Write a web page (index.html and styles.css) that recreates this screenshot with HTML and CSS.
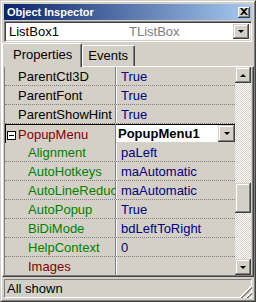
FILE: index.html
```html
<!DOCTYPE html>
<html lang="en">
<head>
    <meta charset="UTF-8">
    <title>Object Inspector</title>
    <link rel="stylesheet" href="styles.css">
</head>
<body>
<div id="window">
    <div id="frame">
        <div id="caption">
            <span class="caption-text">Object Inspector</span>
            <span class="close-btn">
                <svg width="8" height="7" viewBox="0 0 8 7"><path d="M0 0h2l2 2l2-2h2l-3 3.5l3 3.5h-2l-2-2l-2 2h-2l3-3.5z" fill="#000"/></svg>
            </span>
        </div>
        <div id="combo">
            <span class="combo-name">ListBox1</span>
            <span class="combo-type">TListBox</span>
            <span class="btn drop-btn"><i class="arrow-down"></i></span>
        </div>
        <div id="tabs">
            <div class="tab active">Properties</div>
            <div class="tab">Events</div>
        </div>
        <div id="sheet">
            <div id="grid">
                <div id="rows">
                    <div class="row"><div class="name">ParentCtl3D</div><div class="value">True</div></div>
                    <div class="row"><div class="name">ParentFont</div><div class="value">True</div></div>
                    <div class="row"><div class="name">ParentShowHint</div><div class="value">True</div></div>
                    <div class="row selected">
                        <div class="name ref"><span class="expand"></span>PopupMenu</div>
                        <div class="value"><span class="edit">PopupMenu1</span><span class="btn edit-btn"><i class="arrow-down"></i></span></div>
                    </div>
                    <div class="row"><div class="name sub">Alignment</div><div class="value">paLeft</div></div>
                    <div class="row"><div class="name sub">AutoHotkeys</div><div class="value">maAutomatic</div></div>
                    <div class="row"><div class="name sub">AutoLineReduction</div><div class="value">maAutomatic</div></div>
                    <div class="row"><div class="name sub">AutoPopup</div><div class="value">True</div></div>
                    <div class="row"><div class="name sub">BiDiMode</div><div class="value">bdLeftToRight</div></div>
                    <div class="row"><div class="name sub">HelpContext</div><div class="value">0</div></div>
                    <div class="row"><div class="name sub ref">Images</div><div class="value"></div></div>
                </div>
                <div id="scrollbar">
                    <span class="btn sb-btn"><i class="arrow-up"></i></span>
                    <span class="track top-track"></span>
                    <span class="btn thumb"></span>
                    <span class="track"></span>
                    <span class="btn sb-btn"><i class="arrow-down"></i></span>
                </div>
            </div>
        </div>
        <div id="status">
            <span class="panel">All shown</span>
            <span class="grip"></span>
        </div>
    </div>
</div>
</body>
</html>
```
FILE: styles.css
```css
*{
    margin: 0;
    padding: 0;
    box-sizing: border-box;
}
body{
    width: 256px;
    height: 302px;
    overflow: hidden;
    background: #d4d0c8;
    font-family: "Liberation Sans", Arial, sans-serif;
    font-size: 13px;
    color: #000;
}
#window{
    width: 256px;
    height: 302px;
    border: 1px solid;
    border-color: #d4d0c8 #404040 #404040 #d4d0c8;
}
#frame{
    height: 100%;
    border: 1px solid;
    border-color: #fff #808080 #808080 #fff;
    padding: 2px;
    display: flex;
    flex-direction: column;
}

/* caption */
#caption{
    height: 16px;
    flex: none;
    display: flex;
    align-items: center;
    justify-content: space-between;
    background: linear-gradient(to right, #0a246a, #a6caf0);
    color: #fff;
    padding: 0 2px 0 3px;
}
.caption-text{
    font-weight: bold;
    font-size: 11px;
}
.close-btn{
    width: 12px;
    height: 11px;
    display: flex;
    align-items: center;
    justify-content: center;
    background: #d4d0c8;
    box-shadow: inset -1px -1px #404040, inset 1px 1px #fff, inset -2px -2px #808080;
    padding-bottom: 1px;
}

/* 3d buttons and arrows */
.btn{
    display: flex;
    align-items: center;
    justify-content: center;
    background: #d4d0c8;
    box-shadow: inset -1px -1px #404040, inset 1px 1px #d4d0c8, inset -2px -2px #808080, inset 2px 2px #fff;
}
.arrow-down{
    width: 0;
    height: 0;
    border-left: 3px solid transparent;
    border-right: 3px solid transparent;
    border-top: 3px solid #000;
}
.arrow-up{
    width: 0;
    height: 0;
    border-left: 3px solid transparent;
    border-right: 3px solid transparent;
    border-bottom: 3px solid #000;
}

/* component combo */
#combo{
    height: 21px;
    flex: none;
    margin-top: 1px;
    display: flex;
    align-items: center;
    background: #fff;
    border: 1px solid;
    border-color: #808080 #fff #fff #808080;
    box-shadow: inset 1px 1px #404040, inset -1px -1px #d4d0c8;
    padding: 2px 2px 2px 4px;
}
.combo-name{
    width: 120px;
}
.combo-type{
    flex: 1;
    color: #808080;
}
.drop-btn{
    width: 16px;
    height: 15px;
}

/* tabs */
#tabs{
    height: 24px;
    flex: none;
    display: flex;
    align-items: flex-end;
    margin: 0 -2px;
    position: relative;
    z-index: 1;
}
.tab{
    height: 21px;
    padding: 2px 6px 0 5px;
    border: 1px solid;
    border-bottom: 0;
    border-color: #fff #404040 #fff #fff;
    box-shadow: inset -1px 0 #808080;
    border-radius: 2px 2px 0 0;
}
.tab.active{
    height: 24px;
    padding: 3px 9px 0 10px;
    margin-bottom: -1px;
    background: #d4d0c8;
}

/* property grid */
#sheet{
    flex: 1;
    margin: 0 -2px;
    border: 1px solid;
    border-color: #fff #404040 #404040 #fff;
    box-shadow: inset -1px -1px #808080;
    padding: 0 2px 1px 1px;
    overflow: hidden;
}
#grid{
    height: 100%;
    display: flex;
    border-left: 1px solid #808080;
}
#rows{
    width: 230px;
    overflow: hidden;
}
.row{
    height: 19px;
    display: flex;
    border-bottom: 1px dotted #808080;
}
.name{
    width: 111px;
    flex: none;
    padding: 2px 0 0 13px;
    white-space: nowrap;
    overflow: hidden;
    border-right: 1px solid #808080;
}
.name.sub{
    padding-left: 23px;
    color: #008000;
}
.name.ref{
    color: #800000;
}
.value{
    flex: 1;
    padding: 2px 0 0 4px;
    color: #000080;
    border-left: 1px solid #fff;
    white-space: nowrap;
}
.row.selected{
    border-bottom: 0;
    box-shadow: inset 0 1px #000, inset 1px 0 #000;
}
.row.selected .name{
    display: flex;
    align-items: center;
    padding: 1px 0 0 2px;
    border-right: 1px solid #808080;
}
.expand{
    width: 9px;
    height: 9px;
    margin: 2px 2px 0 0;
    border: 1px solid #000;
    background: #fff;
    position: relative;
}
.expand:after{
    content: "";
    position: absolute;
    left: 1px;
    top: 3px;
    width: 5px;
    height: 1px;
    background: #000;
}
.row.selected .value{
    display: flex;
    padding: 1px 0 1px 0;
    border-left: 0;
}
.edit{
    flex: 1;
    background: #fff;
    color: #000;
    font-weight: bold;
    padding: 1px 0 0 2px;
}
.edit-btn{
    width: 17px;
}

/* scrollbar */
#scrollbar{
    width: 16px;
    display: flex;
    flex-direction: column;
}
.sb-btn{
    height: 16px;
    flex: none;
}
.track{
    flex: 1;
    background: repeating-conic-gradient(#fff 0 25%, #d4d0c8 0 50%) 0 0/2px 2px;
}
.top-track{
    flex: none;
    height: 100px;
}
.thumb{
    height: 30px;
    flex: none;
}

/* status bar */
#status{
    height: 19px;
    flex: none;
    margin-top: 2px;
    display: flex;
    position: relative;
}
.panel{
    flex: 1;
    border: 1px solid;
    border-color: #808080 #fff #fff #808080;
    padding: 1px 0 0 2px;
}
.grip{
    position: absolute;
    right: 0;
    bottom: 0;
    width: 12px;
    height: 12px;
    background: linear-gradient(135deg, transparent 0 45%, #fff 45% 52%, #808080 52% 62%, transparent 62% 70%, #fff 70% 76%, #808080 76% 86%, transparent 86% 90%, #fff 90%);
}
```
